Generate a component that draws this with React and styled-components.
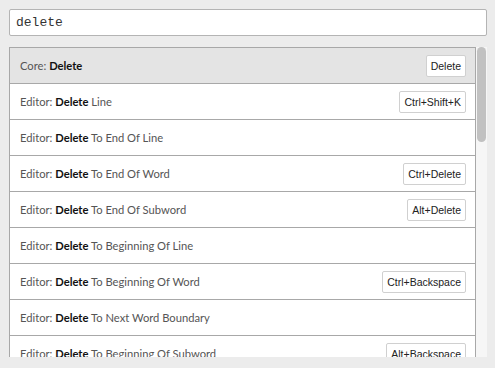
import styled, { createGlobalStyle } from "styled-components";

const GlobalStyle = createGlobalStyle`
  html, body {
    margin: 0;
    padding: 0;
    background: #ececec;
  }
  body {
    font-family: Lato, "Noto Sans", sans-serif;
  }
`;

const Page = styled.div`
  padding: 9px 8px 0 9px;
  display: flex;
  flex-direction: column;
  gap: 11px;
  height: 368px;
  box-sizing: border-box;
`;

const SearchInput = styled.input`
  box-sizing: border-box;
  width: 478px;
  height: 27px;
  border: 1px solid #b4b4b4;
  border-radius: 2px;
  background: #fff;
  padding: 0 6px;
  font-family: "Liberation Mono", "DejaVu Sans Mono", monospace;
  font-size: 13px;
  color: #333;
  outline: none;
`;

const Results = styled.div`
  display: flex;
  width: 478px;
  height: 310px;
`;

const Viewport = styled.div`
  width: 467px;
  height: 100%;
  overflow: hidden;
`;

const Track = styled.div`
  width: 11px;
  height: 100%;
  background: #f6f6f6;
  padding: 0 1px;
  box-sizing: border-box;
`;

const Thumb = styled.div`
  width: 9px;
  height: 95px;
  background: #c1c1c1;
  border-radius: 5px;
`;

const List = styled.ul`
  list-style: none;
  margin: 0;
  padding: 0;
  border: 1px solid #a8a8a8;
  border-bottom: none;
  background: #fff;
`;

const Row = styled.li`
  display: flex;
  align-items: center;
  justify-content: space-between;
  height: 35px;
  padding: 0 9px 0 10px;
  border-bottom: 1px solid #a8a8a8;
  background: ${(p) => (p.$active ? "#e4e4e4" : "#fff")};
  font-size: 11.2px;
  color: #555;
`;

const Label = styled.span`
  white-space: nowrap;

  b {
    font-weight: 700;
    color: #111;
  }
`;

const Key = styled.span`
  box-sizing: border-box;
  height: 22px;
  display: flex;
  align-items: center;
  padding: 0 4px;
  background: #fff;
  border: 1px solid #d0d0d0;
  border-radius: 2px;
  font-family: "Liberation Sans", Arial, sans-serif;
  font-size: 10.5px;
  color: #222;
  white-space: nowrap;
`;

const commands = [
  ["Core:", "", "Delete"],
  ["Editor:", " Line", "Ctrl+Shift+K"],
  ["Editor:", " To End Of Line", null],
  ["Editor:", " To End Of Word", "Ctrl+Delete"],
  ["Editor:", " To End Of Subword", "Alt+Delete"],
  ["Editor:", " To Beginning Of Line", null],
  ["Editor:", " To Beginning Of Word", "Ctrl+Backspace"],
  ["Editor:", " To Next Word Boundary", null],
  ["Editor:", " To Beginning Of Subword", "Alt+Backspace"],
];

export default function App() {
  return (
    <>
      <GlobalStyle />
      <Page>
        <SearchInput defaultValue="delete" />
        <Results>
          <Viewport>
            <List>
              {commands.map(([scope, rest, key], i) => (
                <Row key={i} $active={i === 0}>
                  <Label>
                    {scope} <b>Delete</b>
                    {rest}
                  </Label>
                  {key && <Key>{key}</Key>}
                </Row>
              ))}
            </List>
          </Viewport>
          <Track>
            <Thumb />
          </Track>
        </Results>
      </Page>
    </>
  );
}
